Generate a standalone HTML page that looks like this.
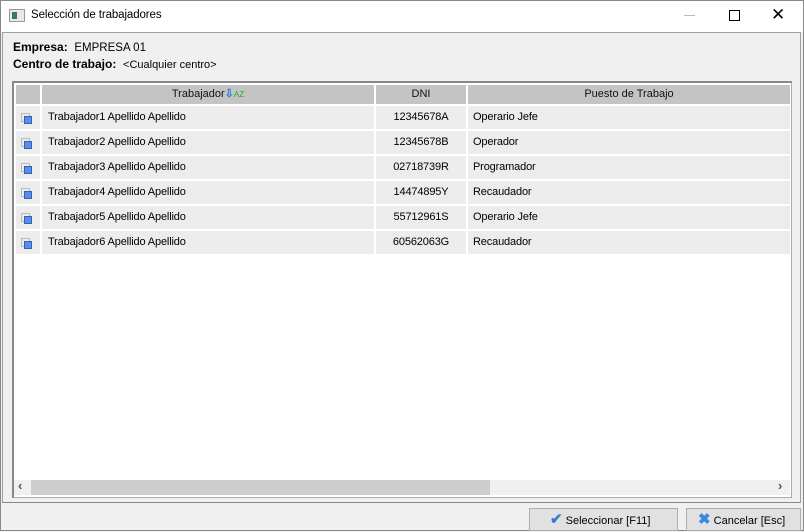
<!DOCTYPE html><html><head><style>
body{margin:0;width:804px;height:531px;overflow:hidden;background:#f0f0f0;font-family:"Liberation Sans",sans-serif;font-size:12px;color:#000;position:relative}
.a{position:absolute}
.cell{position:absolute;background:#ececec;height:23px;line-height:23px;white-space:nowrap;overflow:hidden;font-size:11px;letter-spacing:-0.15px}
.hd{position:absolute;background:#c4c4c4;height:19px;line-height:19px;top:85px;text-align:center;color:#111;font-size:11px}
.cb{position:absolute;width:10px;height:10px}
</style></head><body>
<div class="a" style="left:0;top:0;width:802px;height:529px;border:1px solid #888"></div>
<div class="a" style="left:1px;top:1px;width:802px;height:31px;background:#fff"></div>
<div class="a" style="left:9px;top:9px;width:14px;height:11px;border:1px solid #999;background:#e8e8e8"><div class="a" style="left:2px;top:2px;width:5px;height:7px;background:#3a7a5a"></div></div>
<div class="a" style="left:31px;top:9px;font-size:11.5px;letter-spacing:-0.1px">Selección de trabajadores</div>
<div class="a" style="left:684px;top:15px;width:11px;height:1px;background:#bbb"></div>
<div class="a" style="left:729px;top:10px;width:9px;height:9px;border:1px solid #000"></div>
<div class="a" style="left:771px;top:6px;font-size:17px;line-height:17px">✕</div>
<div class="a" style="left:2px;top:32px;width:797px;height:469px;border:1px solid #a0a0a0;border-bottom-color:#888"></div>
<div class="a" style="left:13px;top:40px"><b>Empresa:</b>&nbsp;&nbsp;<span style="font-size:11.5px">EMPRESA 01</span></div>
<div class="a" style="left:13px;top:57px"><b>Centro de trabajo:</b>&nbsp;&nbsp;<span style="font-size:11px">&lt;Cualquier centro&gt;</span></div>
<div class="a" style="left:12px;top:81px;width:777px;height:414px;background:#fff;border:1px solid #aaa;border-left:2px solid #888;border-top:2px solid #888"></div>
<div class="hd" style="left:16px;width:24px"></div>
<div class="hd" style="left:42px;width:332px">Trabajador<span style="color:#2a7ad8;font-weight:bold">⇩</span><span style="color:#2a2;font-size:8px">AZ</span></div>
<div class="hd" style="left:376px;width:90px">DNI</div>
<div class="hd" style="left:468px;width:322px">Puesto de Trabajo</div>
<div id="rows"></div>
<script>
var d=[["Trabajador1 Apellido Apellido","12345678A","Operario Jefe"],["Trabajador2 Apellido Apellido","12345678B","Operador"],["Trabajador3 Apellido Apellido","02718739R","Programador"],["Trabajador4 Apellido Apellido","14474895Y","Recaudador"],["Trabajador5 Apellido Apellido","55712961S","Operario Jefe"],["Trabajador6 Apellido Apellido","60562063G","Recaudador"]];
var h="";d.forEach(function(r,i){var y=106+i*25;
h+='<div class="cell" style="left:16px;top:'+y+'px;width:24px"></div>';
h+='<div class="cb" style="left:21px;top:'+(y+7)+'px;border:1px solid #bbb;width:7px;height:7px"></div><div class="cb" style="left:24px;top:'+(y+10)+'px;width:8px;height:8px;background:#5b8ee0;border:1px solid #3060c0;box-sizing:border-box"></div>';
h+='<div class="cell" style="left:42px;top:'+y+'px;width:332px;padding-left:6px;box-sizing:border-box">'+r[0]+'</div>';
h+='<div class="cell" style="left:376px;top:'+y+'px;width:90px;text-align:center">'+r[1]+'</div>';
h+='<div class="cell" style="left:468px;top:'+y+'px;width:322px;padding-left:5px;box-sizing:border-box">'+r[2]+'</div>';});
document.getElementById("rows").innerHTML=h;
</script>
<div class="a" style="left:14px;top:480px;width:776px;height:15px;background:#f0f0f0"></div>
<div class="a" style="left:31px;top:480px;width:459px;height:15px;background:#cdcdcd"></div>
<div class="a" style="left:18px;top:478px;font-size:13px;color:#555;font-weight:bold">‹</div>
<div class="a" style="left:778px;top:478px;font-size:13px;color:#555;font-weight:bold">›</div>
<div class="a" style="left:529px;top:508px;width:149px;height:23px;background:#e1e1e1;border:1px solid #adadad;box-sizing:border-box;line-height:22px;padding-left:20px;font-size:11px"><span style="color:#3a7ad8;font-size:15px;font-weight:bold">✔</span> Seleccionar [F11]</div>
<div class="a" style="left:686px;top:508px;width:115px;height:23px;background:#e1e1e1;border:1px solid #adadad;box-sizing:border-box;line-height:22px;padding-left:11px;font-size:11px"><span style="color:#3a8ae0;font-size:15px;font-weight:bold">✖</span> Cancelar [Esc]</div>
</body></html>
